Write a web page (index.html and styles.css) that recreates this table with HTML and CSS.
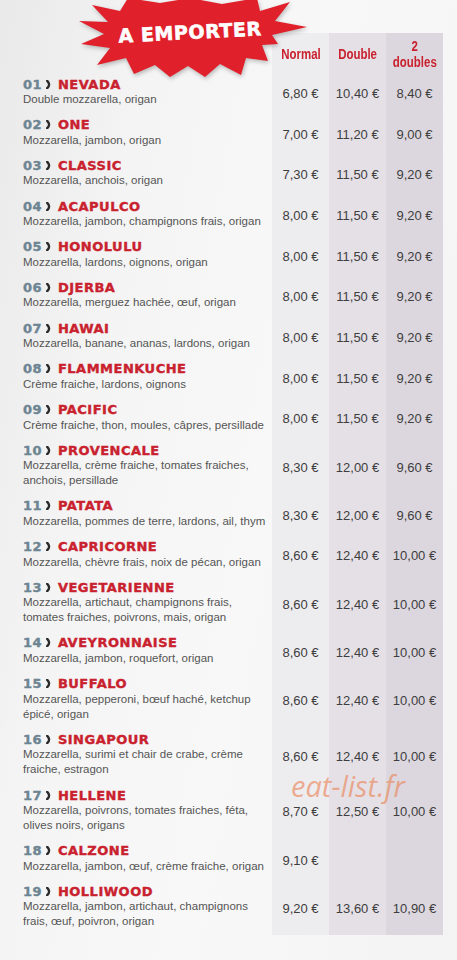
FILE: index.html
```html
<!DOCTYPE html>
<html lang="fr">
<head>
<meta charset="UTF-8" />
<meta name="viewport" content="width=device-width, initial-scale=1.0"/>
<title>Pizzas - A emporter</title>
<link rel="stylesheet" href="styles.css">
</head>
<body>

<div class="page">

  <div class="banner">
    <svg class="burst" viewBox="76 0 234 80" xmlns="http://www.w3.org/2000/svg">
      <polygon fill="#e0202b" points="128,-2 160,3 190,-2 222,4 257,-2 260,11 290,2 275,21 307,27 272,35 278,44 262,45 268,61 246,58 241,75 220,64 205,77 188,66 170,77 155,65 134,74 126,58 97,65 110,48 81,44 104,34 79,21 108,22 92,5 120,11"/>
    </svg>
    <div class="banner-text">A EMPORTER</div>
  </div>

  <div class="menu">
    <div class="row head">
      <div class="item"></div>
      <div class="cell c1"><span class="col-title">Normal</span></div>
      <div class="cell c2"><span class="col-title">Double</span></div>
      <div class="cell c3"><span class="col-title"><span class="line">2</span><span class="line">doubles</span></span></div>
    </div>

    <div class="row">
      <div class="item">
        <div class="name"><span class="num">01</span><svg class="chev" viewBox="0 0 6 9"><path d="M1.2 0.8 Q5 4.5 1.2 8.2"/></svg>NEVADA</div>
        <div class="desc">Double mozzarella, origan</div>
      </div>
      <div class="cell c1">6,80 €</div><div class="cell c2">10,40 €</div><div class="cell c3">8,40 €</div>
    </div>

    <div class="row">
      <div class="item">
        <div class="name"><span class="num">02</span><svg class="chev" viewBox="0 0 6 9"><path d="M1.2 0.8 Q5 4.5 1.2 8.2"/></svg>ONE</div>
        <div class="desc">Mozzarella, jambon, origan</div>
      </div>
      <div class="cell c1">7,00 €</div><div class="cell c2">11,20 €</div><div class="cell c3">9,00 €</div>
    </div>

    <div class="row">
      <div class="item">
        <div class="name"><span class="num">03</span><svg class="chev" viewBox="0 0 6 9"><path d="M1.2 0.8 Q5 4.5 1.2 8.2"/></svg>CLASSIC</div>
        <div class="desc">Mozzarella, anchois, origan</div>
      </div>
      <div class="cell c1">7,30 €</div><div class="cell c2">11,50 €</div><div class="cell c3">9,20 €</div>
    </div>

    <div class="row">
      <div class="item">
        <div class="name"><span class="num">04</span><svg class="chev" viewBox="0 0 6 9"><path d="M1.2 0.8 Q5 4.5 1.2 8.2"/></svg>ACAPULCO</div>
        <div class="desc">Mozzarella, jambon, champignons frais, origan</div>
      </div>
      <div class="cell c1">8,00 €</div><div class="cell c2">11,50 €</div><div class="cell c3">9,20 €</div>
    </div>

    <div class="row">
      <div class="item">
        <div class="name"><span class="num">05</span><svg class="chev" viewBox="0 0 6 9"><path d="M1.2 0.8 Q5 4.5 1.2 8.2"/></svg>HONOLULU</div>
        <div class="desc">Mozzarella, lardons, oignons, origan</div>
      </div>
      <div class="cell c1">8,00 €</div><div class="cell c2">11,50 €</div><div class="cell c3">9,20 €</div>
    </div>

    <div class="row">
      <div class="item">
        <div class="name"><span class="num">06</span><svg class="chev" viewBox="0 0 6 9"><path d="M1.2 0.8 Q5 4.5 1.2 8.2"/></svg>DJERBA</div>
        <div class="desc">Mozzarella, merguez hachée, œuf, origan</div>
      </div>
      <div class="cell c1">8,00 €</div><div class="cell c2">11,50 €</div><div class="cell c3">9,20 €</div>
    </div>

    <div class="row">
      <div class="item">
        <div class="name"><span class="num">07</span><svg class="chev" viewBox="0 0 6 9"><path d="M1.2 0.8 Q5 4.5 1.2 8.2"/></svg>HAWAI</div>
        <div class="desc">Mozzarella, banane, ananas, lardons, origan</div>
      </div>
      <div class="cell c1">8,00 €</div><div class="cell c2">11,50 €</div><div class="cell c3">9,20 €</div>
    </div>

    <div class="row">
      <div class="item">
        <div class="name"><span class="num">08</span><svg class="chev" viewBox="0 0 6 9"><path d="M1.2 0.8 Q5 4.5 1.2 8.2"/></svg>FLAMMENKUCHE</div>
        <div class="desc">Crème fraiche, lardons, oignons</div>
      </div>
      <div class="cell c1">8,00 €</div><div class="cell c2">11,50 €</div><div class="cell c3">9,20 €</div>
    </div>

    <div class="row">
      <div class="item">
        <div class="name"><span class="num">09</span><svg class="chev" viewBox="0 0 6 9"><path d="M1.2 0.8 Q5 4.5 1.2 8.2"/></svg>PACIFIC</div>
        <div class="desc">Crème fraiche, thon, moules, câpres, persillade</div>
      </div>
      <div class="cell c1">8,00 €</div><div class="cell c2">11,50 €</div><div class="cell c3">9,20 €</div>
    </div>

    <div class="row">
      <div class="item">
        <div class="name"><span class="num">10</span><svg class="chev" viewBox="0 0 6 9"><path d="M1.2 0.8 Q5 4.5 1.2 8.2"/></svg>PROVENCALE</div>
        <div class="desc">Mozzarella, crème fraiche, tomates fraiches,<br>anchois, persillade</div>
      </div>
      <div class="cell c1">8,30 €</div><div class="cell c2">12,00 €</div><div class="cell c3">9,60 €</div>
    </div>

    <div class="row">
      <div class="item">
        <div class="name"><span class="num">11</span><svg class="chev" viewBox="0 0 6 9"><path d="M1.2 0.8 Q5 4.5 1.2 8.2"/></svg>PATATA</div>
        <div class="desc">Mozzarella, pommes de terre, lardons, ail, thym</div>
      </div>
      <div class="cell c1">8,30 €</div><div class="cell c2">12,00 €</div><div class="cell c3">9,60 €</div>
    </div>

    <div class="row">
      <div class="item">
        <div class="name"><span class="num">12</span><svg class="chev" viewBox="0 0 6 9"><path d="M1.2 0.8 Q5 4.5 1.2 8.2"/></svg>CAPRICORNE</div>
        <div class="desc">Mozzarella, chèvre frais, noix de pécan, origan</div>
      </div>
      <div class="cell c1">8,60 €</div><div class="cell c2">12,40 €</div><div class="cell c3">10,00 €</div>
    </div>

    <div class="row">
      <div class="item">
        <div class="name"><span class="num">13</span><svg class="chev" viewBox="0 0 6 9"><path d="M1.2 0.8 Q5 4.5 1.2 8.2"/></svg>VEGETARIENNE</div>
        <div class="desc">Mozzarella, artichaut, champignons frais,<br>tomates fraiches, poivrons, mais, origan</div>
      </div>
      <div class="cell c1">8,60 €</div><div class="cell c2">12,40 €</div><div class="cell c3">10,00 €</div>
    </div>

    <div class="row">
      <div class="item">
        <div class="name"><span class="num">14</span><svg class="chev" viewBox="0 0 6 9"><path d="M1.2 0.8 Q5 4.5 1.2 8.2"/></svg>AVEYRONNAISE</div>
        <div class="desc">Mozzarella, jambon, roquefort, origan</div>
      </div>
      <div class="cell c1">8,60 €</div><div class="cell c2">12,40 €</div><div class="cell c3">10,00 €</div>
    </div>

    <div class="row">
      <div class="item">
        <div class="name"><span class="num">15</span><svg class="chev" viewBox="0 0 6 9"><path d="M1.2 0.8 Q5 4.5 1.2 8.2"/></svg>BUFFALO</div>
        <div class="desc">Mozzarella, pepperoni, bœuf haché, ketchup<br>épicé, origan</div>
      </div>
      <div class="cell c1">8,60 €</div><div class="cell c2">12,40 €</div><div class="cell c3">10,00 €</div>
    </div>

    <div class="row">
      <div class="item">
        <div class="name"><span class="num">16</span><svg class="chev" viewBox="0 0 6 9"><path d="M1.2 0.8 Q5 4.5 1.2 8.2"/></svg>SINGAPOUR</div>
        <div class="desc">Mozzarella, surimi et chair de crabe, crème<br>fraiche, estragon</div>
      </div>
      <div class="cell c1">8,60 €</div><div class="cell c2">12,40 €</div><div class="cell c3">10,00 €</div>
    </div>

    <div class="row">
      <div class="item">
        <div class="name"><span class="num">17</span><svg class="chev" viewBox="0 0 6 9"><path d="M1.2 0.8 Q5 4.5 1.2 8.2"/></svg>HELLENE</div>
        <div class="desc">Mozzarella, poivrons, tomates fraiches, féta,<br>olives noirs, origans</div>
      </div>
      <div class="cell c1">8,70 €</div><div class="cell c2">12,50 €</div><div class="cell c3">10,00 €</div>
    </div>

    <div class="row">
      <div class="item">
        <div class="name"><span class="num">18</span><svg class="chev" viewBox="0 0 6 9"><path d="M1.2 0.8 Q5 4.5 1.2 8.2"/></svg>CALZONE</div>
        <div class="desc">Mozzarella, jambon, œuf, crème fraiche, origan</div>
      </div>
      <div class="cell c1">9,10 €</div><div class="cell c2"></div><div class="cell c3"></div>
    </div>

    <div class="row">
      <div class="item">
        <div class="name"><span class="num">19</span><svg class="chev" viewBox="0 0 6 9"><path d="M1.2 0.8 Q5 4.5 1.2 8.2"/></svg>HOLLIWOOD</div>
        <div class="desc">Mozzarella, jambon, artichaut, champignons<br>frais, œuf, poivron, origan</div>
      </div>
      <div class="cell c1">9,20 €</div><div class="cell c2">13,60 €</div><div class="cell c3">10,90 €</div>
    </div>
  </div>

  <div class="watermark">eat-list.fr</div>
</div>

</body>
</html>
```

FILE: styles.css
```css
:root {
  --red: #c9212e;
  --num: #6d8592;
  --text: #555;
  --price: #3e3e3e;
  --col1: #edecef;
  --col2: #e4e0e6;
  --col3: #dcd7de;
}

body {
  margin: 0;
  font-family: 'Liberation Sans', Arial, sans-serif;
  background: linear-gradient(100deg, #e9e9e9 0%, #f4f4f4 25%, #f8f8f8 55%, #f3f3f3 100%);
  min-height: 960px;
}

.page {
  position: relative;
  width: 457px;
  height: 960px;
  overflow: hidden;
  padding-top: 33px;
  box-sizing: border-box;
}

/* bandeau rouge */
.banner {
  position: absolute;
  left: 76px;
  top: 0;
  width: 234px;
  height: 80px;
  z-index: 2;
}
.burst {
  display: block;
  width: 234px;
  height: 80px;
  filter: drop-shadow(1px 2px 2px rgba(0,0,0,0.25));
}
.banner-text {
  position: absolute;
  left: 38px;
  width: 152px;
  top: 21px;
  text-align: center;
  color: #fff;
  font-family: 'DejaVu Sans', sans-serif;
  font-weight: bold;
  font-size: 19px;
  letter-spacing: 0.6px;
  -webkit-text-stroke: 0.6px #fff;
  white-space: nowrap;
  transform: rotate(-3deg);
}

/* grille */
.menu {
  margin-left: 23px;
}
.row {
  display: grid;
  grid-template-columns: 249px 57px 57px 57px;
}
.row.head {
  height: 39px;
}
.cell {
  display: flex;
  align-items: center;
  justify-content: center;
  font-size: 13px;
  color: var(--price);
  padding-top: 2px;
}
.c1 { background: var(--col1); }
.c2 { background: var(--col2); }
.c3 { background: var(--col3); }

.head .cell {
  padding-top: 2px;
}
.col-title {
  display: inline-block;
  color: var(--red);
  font-weight: bold;
  font-size: 14.5px;
  line-height: 16px;
  text-align: center;
  white-space: nowrap;
  transform: scaleX(0.79);
}
.col-title .line {
  display: block;
}

.item {
  padding: 4px 0 5.7px;
}
.name {
  display: flex;
  align-items: center;
  height: 16px;
  font-family: 'DejaVu Sans', sans-serif;
  font-weight: bold;
  font-size: 13px;
  letter-spacing: 0.5px;
  -webkit-text-stroke: 0.4px currentColor;
  color: var(--red);
  white-space: nowrap;
}
.num {
  color: var(--num);
  letter-spacing: 0.4px;
}
.chev {
  width: 6px;
  height: 9px;
  margin: 0 6px 0 4px;
}
.chev path {
  fill: none;
  stroke: #2a2a2a;
  stroke-width: 2.4;
  stroke-linecap: round;
}
.desc {
  font-size: 11.5px;
  line-height: 15px;
  color: var(--text);
  white-space: nowrap;
}

.watermark {
  position: absolute;
  left: 291px;
  top: 766px;
  font-family: 'Open Sans', sans-serif;
  font-style: italic;
  font-size: 29px;
  color: rgba(236, 128, 80, 0.62);
  z-index: 3;
}
```
